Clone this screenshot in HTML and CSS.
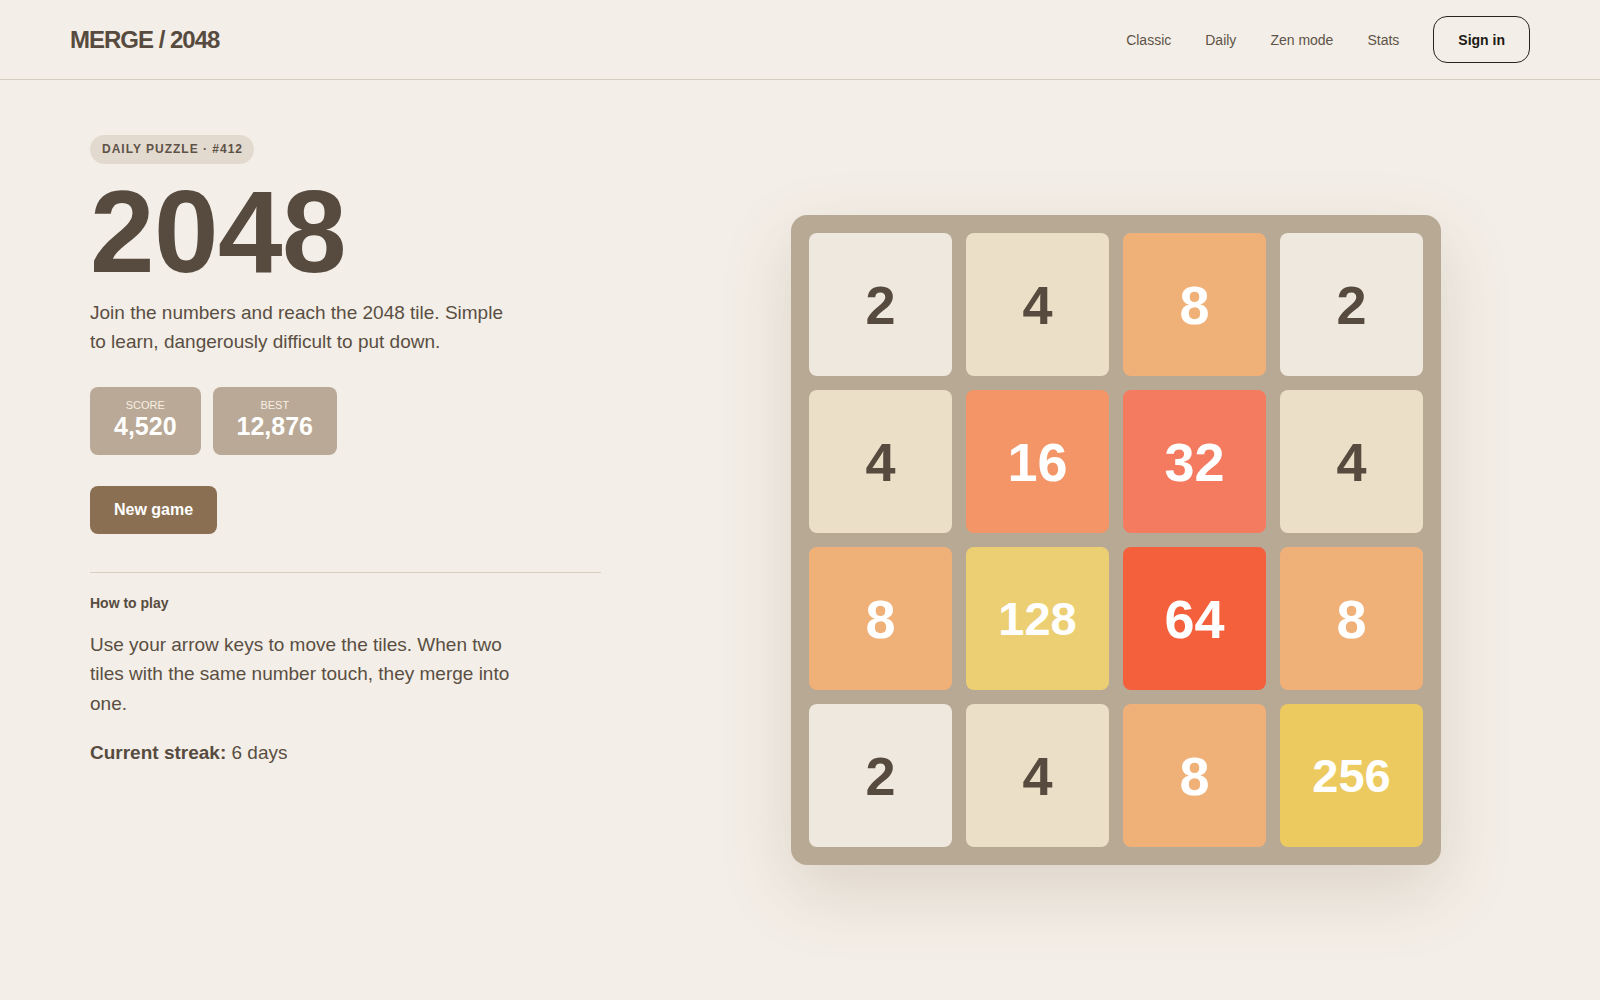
FILE: index.html
```html
<!DOCTYPE html>
<html lang="en">
<head>
<meta charset="utf-8">
<title>MERGE / 2048</title>
<link rel="stylesheet" href="styles.css">
</head>
<body>
<header class="topbar">
  <div class="logo">MERGE / 2048</div>
  <nav class="nav">
    <a class="nav-link" href="#">Classic</a>
    <a class="nav-link" href="#">Daily</a>
    <a class="nav-link" href="#">Zen mode</a>
    <a class="nav-link" href="#">Stats</a>
    <button class="signin">Sign in</button>
  </nav>
</header>
<main class="layout">
  <section class="intro">
    <span class="badge">DAILY PUZZLE · #412</span>
    <h1 class="title">2048</h1>
    <p class="lede">Join the numbers and reach the 2048 tile. Simple to learn, dangerously difficult to put down.</p>
    <div class="scores">
      <div class="score">
        <span class="score-label">SCORE</span>
        <span class="score-value">4,520</span>
      </div>
      <div class="score">
        <span class="score-label">BEST</span>
        <span class="score-value">12,876</span>
      </div>
    </div>
    <button class="new-game">New game</button>
    <hr class="divider">
    <h2 class="howto-title">How to play</h2>
    <p class="howto">Use your arrow keys to move the tiles. When two tiles with the same number touch, they merge into one.</p>
    <p class="streak"><strong>Current streak:</strong> 6 days</p>
  </section>
  <section class="board-wrap">
    <div class="board">
      <div class="tile t2">2</div>
      <div class="tile t4">4</div>
      <div class="tile t8">8</div>
      <div class="tile t2">2</div>
      <div class="tile t4">4</div>
      <div class="tile t16">16</div>
      <div class="tile t32">32</div>
      <div class="tile t4">4</div>
      <div class="tile t8">8</div>
      <div class="tile t128 small">128</div>
      <div class="tile t64">64</div>
      <div class="tile t8">8</div>
      <div class="tile t2">2</div>
      <div class="tile t4">4</div>
      <div class="tile t8">8</div>
      <div class="tile t256 small">256</div>
    </div>
  </section>
</main>
</body>
</html>
```

FILE: styles.css
```css
* { box-sizing: border-box; }

html, body {
  margin: 0;
  padding: 0;
}

body {
  background: #f3eee7;
  color: #574b3f;
  font-family: "Liberation Sans", Arial, sans-serif;
  min-height: 100vh;
}

.topbar {
  height: 80px;
  padding: 0 70px;
  display: flex;
  align-items: center;
  justify-content: space-between;
  border-bottom: 1px solid #d6cec2;
}

.logo {
  font-size: 24px;
  font-weight: 700;
  letter-spacing: -1px;
  color: #574b3f;
}

.nav {
  display: flex;
  align-items: center;
  gap: 34px;
}

.nav-link {
  font-size: 14px;
  color: #5d5348;
  text-decoration: none;
}

.signin {
  font-family: inherit;
  font-size: 14px;
  font-weight: 700;
  line-height: 17px;
  white-space: nowrap;
  color: #1d1915;
  background: transparent;
  border: 1.5px solid #2a241f;
  border-radius: 14px;
  padding: 1px 24px 0 24px;
  height: 47px;
}

.layout {
  display: grid;
  grid-template-columns: 511px 1fr;
  column-gap: 121px;
  padding: 55px 90px 0 90px;
}

.intro {
  display: flex;
  flex-direction: column;
  align-items: flex-start;
}

.badge {
  display: inline-block;
  background: #e3dacf;
  color: #5e5247;
  font-size: 12px;
  font-weight: 700;
  letter-spacing: 1px;
  line-height: 15px;
  padding: 7px 11px 7px 12px;
  border-radius: 999px;
}

.title {
  margin: 10px 0 0 0;
  font-size: 116px;
  line-height: 1;
  font-weight: 700;
  letter-spacing: -0.5px;
  color: #574b3f;
}

.lede {
  margin: 8px 0 0 0;
  max-width: 426px;
  font-size: 19px;
  line-height: 1.55;
  color: #5a4e43;
}

.scores {
  display: flex;
  gap: 12px;
  margin-top: 30px;
}

.score {
  display: flex;
  flex-direction: column;
  align-items: center;
  background: #baa996;
  border-radius: 8px;
  padding: 12px 24px 12px;
  height: 68px;
}

.score-label {
  font-size: 11px;
  line-height: 13px;
  color: #f6efe5;
}

.score-value {
  font-size: 25px;
  line-height: 29px;
  font-weight: 700;
  color: #ffffff;
}

.new-game {
  margin-top: 31px;
  font-family: inherit;
  font-size: 16px;
  font-weight: 700;
  line-height: 20px;
  color: #ffffff;
  background: #8b6f53;
  border: none;
  border-radius: 8px;
  padding: 14px 24px;
}

.divider {
  align-self: stretch;
  margin: 38px 0 0 0;
  border: none;
  border-top: 1px solid #d8cfc3;
  height: 0;
}

.howto-title {
  margin: 22px 0 0 0;
  font-size: 14px;
  line-height: 17px;
  font-weight: 700;
  color: #574b3f;
}

.howto {
  margin: 18px 0 0 0;
  max-width: 426px;
  font-size: 19px;
  line-height: 1.55;
  color: #5a4e43;
}

.streak {
  margin: 20px 0 0 0;
  font-size: 19px;
  line-height: 1.55;
  color: #5a4e43;
}

.streak strong {
  color: #574b3f;
}

.board-wrap {
  display: flex;
  justify-content: center;
  align-items: flex-start;
  padding-top: 80px;
}

.board {
  display: grid;
  grid-template-columns: repeat(4, 143px);
  grid-auto-rows: 143px;
  gap: 14px;
  padding: 18px;
  background: #b8a995;
  border-radius: 16px;
  box-shadow: 0 26px 70px rgba(110, 85, 55, 0.17);
}

.tile {
  display: flex;
  align-items: center;
  justify-content: center;
  border-radius: 8px;
  font-size: 54px;
  font-weight: 700;
  color: #574b3f;
}

.tile.small { font-size: 47px; }

.t2 { background: #eee8de; }
.t4 { background: #ebe0c7; }
.t8 { background: #f0b179; color: #ffffff; }
.t16 { background: #f39566; color: #ffffff; }
.t32 { background: #f57b60; color: #ffffff; }
.t64 { background: #f45f3c; color: #ffffff; }
.t128 { background: #edcf73; color: #ffffff; }
.t256 { background: #ecca60; color: #ffffff; }
```
